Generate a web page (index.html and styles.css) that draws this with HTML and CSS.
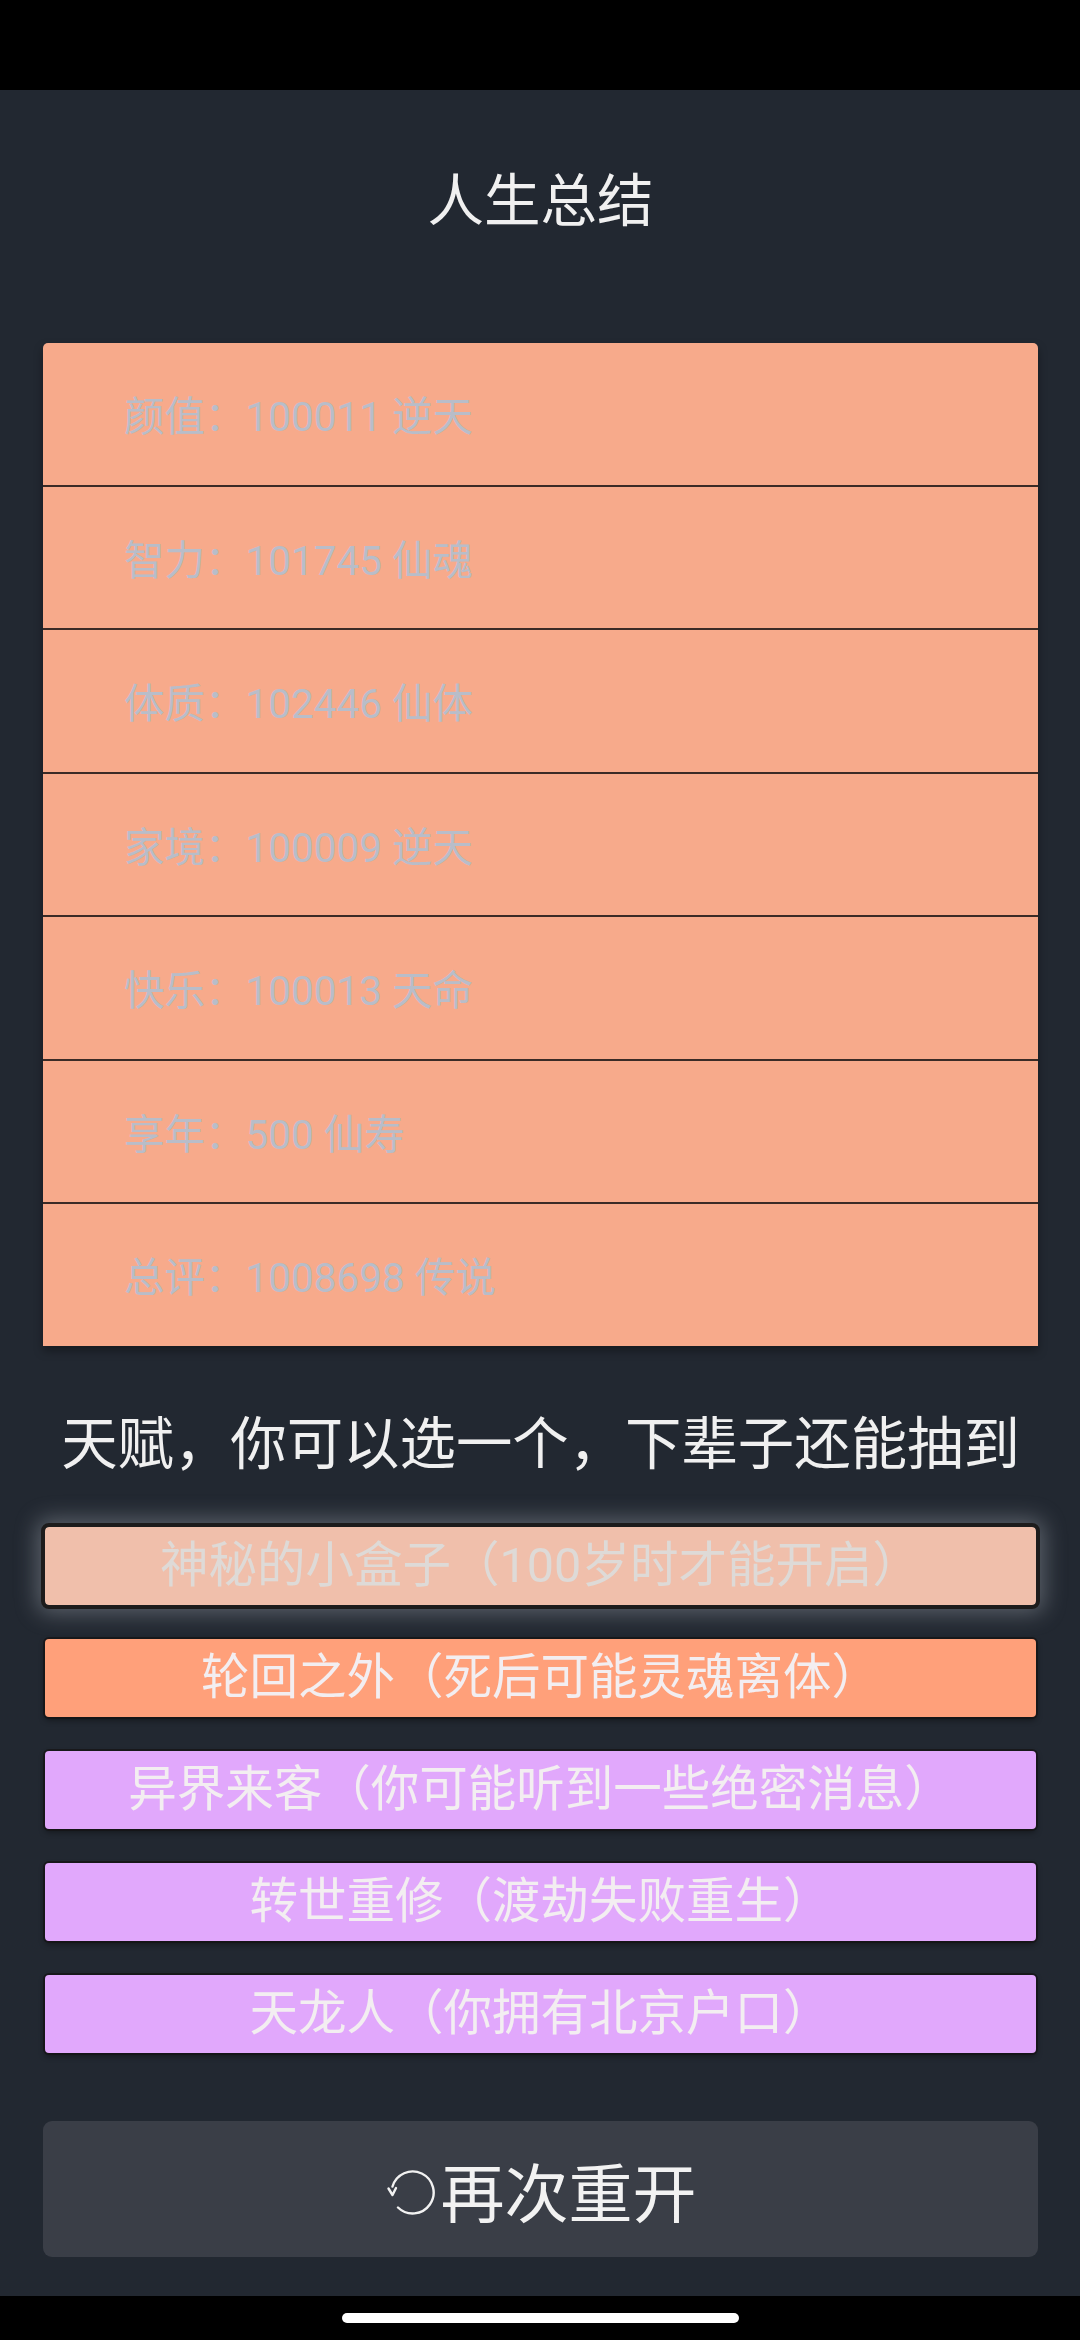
FILE: index.html
```html
<!DOCTYPE html>
<html lang="zh-CN">
<head>
<meta charset="utf-8">
<title>人生总结</title>
<link rel="stylesheet" href="styles.css">
</head>
<body>
<div class="statusbar"></div>
<main class="main">
  <h1 class="title">人生总结</h1>
  <ul class="summary">
    <li class="row">颜值：100011 逆天</li>
    <li class="row">智力：101745 仙魂</li>
    <li class="row">体质：102446 仙体</li>
    <li class="row">家境：100009 逆天</li>
    <li class="row">快乐：100013 天命</li>
    <li class="row">享年：500 仙寿</li>
    <li class="row">总评：1008698 传说</li>
  </ul>
  <h2 class="subtitle">天赋，你可以选一个，下辈子还能抽到</h2>
  <div class="talents">
    <button class="talent talent-selected">神秘的小盒子（100岁时才能开启）</button>
    <button class="talent talent-orange">轮回之外（死后可能灵魂离体）</button>
    <button class="talent talent-purple">异界来客（你可能听到一些绝密消息）</button>
    <button class="talent talent-purple">转世重修（渡劫失败重生）</button>
    <button class="talent talent-purple">天龙人（你拥有北京户口）</button>
  </div>
  <button class="restart">
    <svg class="restart-icon" width="50" height="50" viewBox="0 0 50 50" aria-hidden="true">
      <path d="M7.5 19.5 A21 21 0 1 1 13 40.5" fill="none" stroke="#f2f2f2" stroke-width="2.4" stroke-linecap="round"/>
      <path d="M3.5 21.5 L7.5 28 L11 21" fill="none" stroke="#f2f2f2" stroke-width="2.4" stroke-linecap="round" stroke-linejoin="round"/>
    </svg>
    <span class="restart-label">再次重开</span>
  </button>
</main>
<div class="navbar"><div class="home-indicator"></div></div>
</body>
</html>
```

FILE: styles.css
```css
* {
  box-sizing: border-box;
}

html, body {
  margin: 0;
  padding: 0;
  background: #000;
}

body {
  width: 1080px;
  height: 2340px;
  font-family: Roboto, "Noto Sans CJK SC", "Noto Sans", sans-serif;
  display: flex;
  flex-direction: column;
}

.statusbar {
  height: 90px;
  background: #000;
  flex: none;
}

.main {
  flex: none;
  height: 2206px;
  background: #222831;
  padding: 0 42px 0 43px;
  display: flex;
  flex-direction: column;
}

.title {
  margin: 66px 0 107px;
  height: 80px;
  line-height: 80px;
  font-size: 56.5px;
  font-weight: 400;
  color: #f0f0f0;
  text-align: center;
  font-family: "Noto Sans CJK SC", sans-serif;
}

.summary {
  list-style: none;
  margin: 0;
  padding: 0;
  background: #f7aa8b;
  border-radius: 5px 5px 0 0;
  box-shadow: 0 5px 10px rgba(0, 0, 0, 0.35);
  display: flex;
  flex-direction: column;
}

.row {
  height: 141.5px;
  display: flex;
  align-items: center;
  padding-left: 81px;
  font-size: 40.5px;
  color: #b8bdc9;
}

.row + .row {
  height: 143.5px;
  border-top: 2px solid #3b2b26;
}

.subtitle {
  margin: 56px 0 45px;
  height: 80px;
  line-height: 76px;
  font-size: 56.4px;
  font-weight: 400;
  color: #f0f0f0;
  text-align: center;
  font-family: "Noto Sans CJK SC", sans-serif;
  white-space: nowrap;
}

.talents {
  display: flex;
  flex-direction: column;
  gap: 34px;
}

.talent {
  height: 78px;
  margin: 0 2px;
  border: none;
  border-radius: 4px;
  font-family: Roboto, "Noto Sans CJK SC", sans-serif;
  font-size: 48.5px;
  color: #f3eef1;
  padding: 0 0 9px;
  display: flex;
  align-items: center;
  justify-content: center;
  box-shadow: 0 0 0 2px rgba(22, 20, 22, 0.75), 0 3px 6px rgba(0, 0, 0, 0.45);
}

.talent-selected {
  background: #f0bfab;
  color: #dedad7;
  outline: 4px solid #1d1c1c;
  box-shadow: 0 0 22px 8px rgba(200, 205, 215, 0.35);
  border-radius: 4px;
}

.talent-orange {
  background: #ffa07a;
}

.talent-purple {
  background: #e1a8fc;
}

.restart {
  margin-top: 68px;
  height: 136px;
  border: none;
  border-radius: 9px;
  background: #3a3e47;
  color: #f2f2f2;
  display: flex;
  align-items: center;
  justify-content: center;
  gap: 6px;
  padding: 0;
}

.restart-icon {
  display: block;
  margin-top: 6px;
}

.restart-label {
  font-family: "Noto Sans CJK SC", sans-serif;
  font-size: 64px;
  line-height: 1;
  color: #f2f2f2;
}

.navbar {
  flex: none;
  height: 44px;
  background: #000;
  display: flex;
  justify-content: center;
  padding-top: 17px;
}

.home-indicator {
  width: 397px;
  height: 10px;
  border-radius: 5px;
  background: #fff;
}
```
